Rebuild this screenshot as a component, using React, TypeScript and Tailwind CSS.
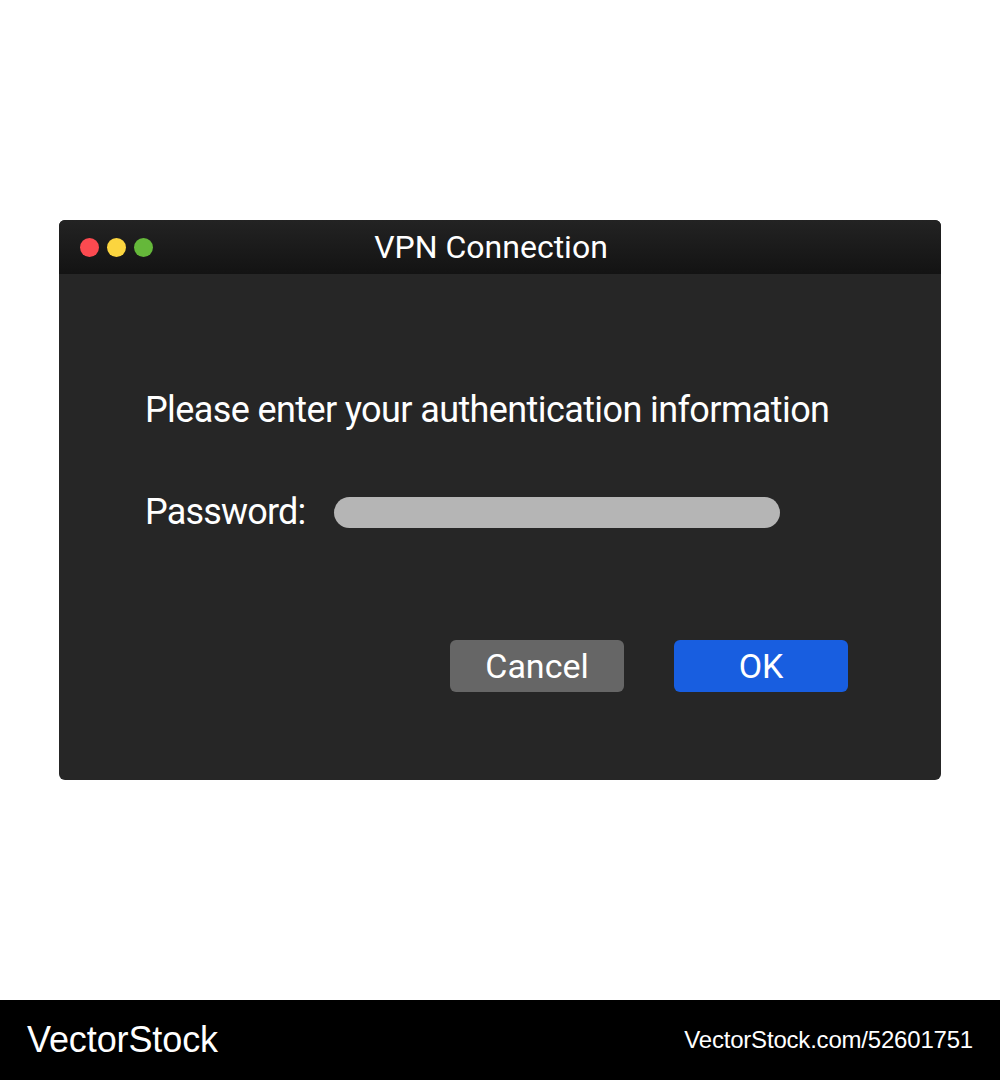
export default function App() {
  return (
    <div className="flex h-[1080px] w-[1000px] flex-col bg-white" style={{ fontFamily: "Roboto, sans-serif" }}>
      <div className="flex-1 px-[59px] pt-[220px]">
        <div className="h-[560px] overflow-hidden rounded-[6px] bg-[#262626]">
          <div className="relative flex h-[54px] items-center bg-gradient-to-b from-[#232323] to-[#131313]">
            <div className="flex gap-[8px] pl-[21px]">
              <span className="h-[19px] w-[19px] rounded-full bg-[#fc4a50]" />
              <span className="h-[19px] w-[19px] rounded-full bg-[#fbd53f]" />
              <span className="h-[19px] w-[19px] rounded-full bg-[#65b83a]" />
            </div>
            <div className="absolute inset-0 flex items-center justify-center pr-[18px] text-[32px] text-white">
              VPN Connection
            </div>
          </div>
          <div className="px-[86px] pt-[115px]">
            <p className="text-[36px] leading-[42px] tracking-[-0.6px] text-white">Please enter your authentication information</p>
            <div className="mt-[60px] flex items-center gap-[28px]">
              <span className="text-[36px] leading-[42px] tracking-[-0.8px] text-white">Password:</span>
              <div className="h-[31px] w-[446px] rounded-full bg-[#b5b5b5]" />
            </div>
            <div className="mt-[107px] flex justify-end gap-[50px] pr-[7px]">
              <button className="h-[52px] w-[174px] rounded-[6px] bg-[#666666] text-[34px] text-white">Cancel</button>
              <button className="h-[52px] w-[174px] rounded-[6px] bg-[#185ee0] text-[34px] text-white">OK</button>
            </div>
          </div>
        </div>
      </div>
      <div className="flex h-[80px] items-center justify-between bg-black px-[27px] text-white" style={{ fontFamily: "'Liberation Sans', Arial, sans-serif" }}>
        <span className="text-[36px] tracking-[-0.1px]">VectorStock</span>
        <span className="text-[24px] tracking-[-0.2px]">VectorStock.com/52601751</span>
      </div>
    </div>
  );
}
